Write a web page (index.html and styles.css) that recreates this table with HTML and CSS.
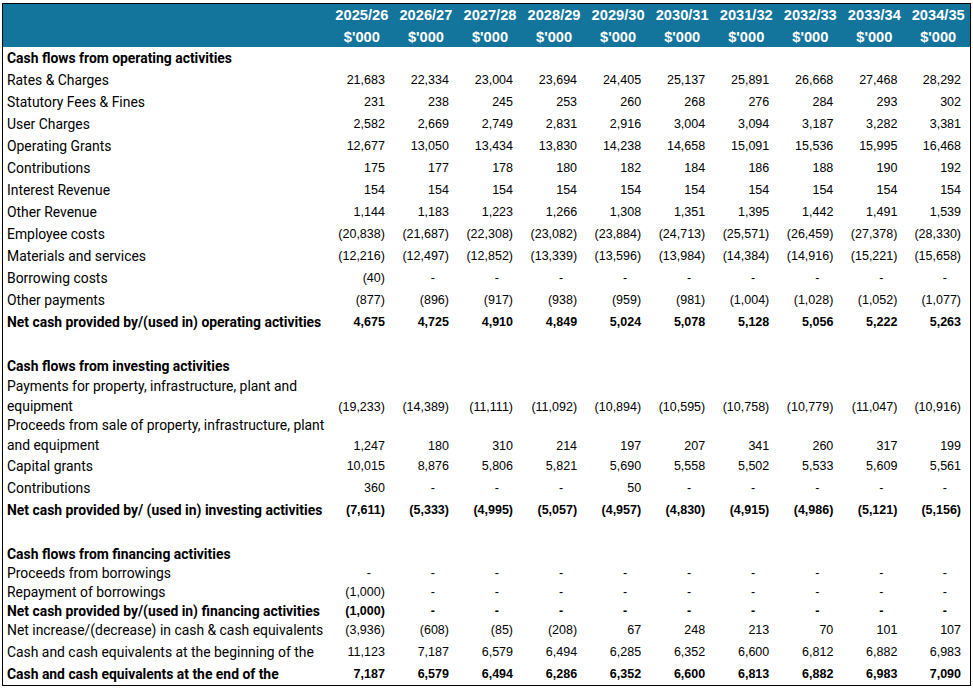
FILE: index.html
```html
<!DOCTYPE html>
<html lang="en">
<head>
<meta charset="utf-8">
<title>Cash flow forecast</title>
<link rel="stylesheet" href="styles.css">
</head>
<body>
<div class="sheet">
<table class="cf">
  <colgroup>
    <col class="c-label">
    <col class="c-num"><col class="c-num"><col class="c-num"><col class="c-num"><col class="c-num">
    <col class="c-num"><col class="c-num"><col class="c-num"><col class="c-num"><col class="c-num">
  </colgroup>
  <thead>
    <tr class="h1">
      <th></th><th>2025/26</th><th>2026/27</th><th>2027/28</th><th>2028/29</th><th>2029/30</th><th>2030/31</th><th>2031/32</th><th>2032/33</th><th>2033/34</th><th>2034/35</th>
    </tr>
    <tr class="h2">
      <th></th><th>$'000</th><th>$'000</th><th>$'000</th><th>$'000</th><th>$'000</th><th>$'000</th><th>$'000</th><th>$'000</th><th>$'000</th><th>$'000</th>
    </tr>
  </thead>
  <tbody>
    <tr class="sec"><td class="lbl">Cash flows from operating activities</td><td></td><td></td><td></td><td></td><td></td><td></td><td></td><td></td><td></td><td></td></tr>
    <tr><td class="lbl">Rates &amp; Charges</td><td>21,683</td><td>22,334</td><td>23,004</td><td>23,694</td><td>24,405</td><td>25,137</td><td>25,891</td><td>26,668</td><td>27,468</td><td>28,292</td></tr>
    <tr><td class="lbl">Statutory Fees &amp; Fines</td><td>231</td><td>238</td><td>245</td><td>253</td><td>260</td><td>268</td><td>276</td><td>284</td><td>293</td><td>302</td></tr>
    <tr><td class="lbl">User Charges</td><td>2,582</td><td>2,669</td><td>2,749</td><td>2,831</td><td>2,916</td><td>3,004</td><td>3,094</td><td>3,187</td><td>3,282</td><td>3,381</td></tr>
    <tr><td class="lbl">Operating Grants</td><td>12,677</td><td>13,050</td><td>13,434</td><td>13,830</td><td>14,238</td><td>14,658</td><td>15,091</td><td>15,536</td><td>15,995</td><td>16,468</td></tr>
    <tr><td class="lbl">Contributions</td><td>175</td><td>177</td><td>178</td><td>180</td><td>182</td><td>184</td><td>186</td><td>188</td><td>190</td><td>192</td></tr>
    <tr><td class="lbl">Interest Revenue</td><td>154</td><td>154</td><td>154</td><td>154</td><td>154</td><td>154</td><td>154</td><td>154</td><td>154</td><td>154</td></tr>
    <tr><td class="lbl">Other Revenue</td><td>1,144</td><td>1,183</td><td>1,223</td><td>1,266</td><td>1,308</td><td>1,351</td><td>1,395</td><td>1,442</td><td>1,491</td><td>1,539</td></tr>
    <tr><td class="lbl">Employee costs</td><td>(20,838)</td><td>(21,687)</td><td>(22,308)</td><td>(23,082)</td><td>(23,884)</td><td>(24,713)</td><td>(25,571)</td><td>(26,459)</td><td>(27,378)</td><td>(28,330)</td></tr>
    <tr><td class="lbl">Materials and services</td><td>(12,216)</td><td>(12,497)</td><td>(12,852)</td><td>(13,339)</td><td>(13,596)</td><td>(13,984)</td><td>(14,384)</td><td>(14,916)</td><td>(15,221)</td><td>(15,658)</td></tr>
    <tr><td class="lbl">Borrowing costs</td><td>(40)</td><td class="dash">-</td><td class="dash">-</td><td class="dash">-</td><td class="dash">-</td><td class="dash">-</td><td class="dash">-</td><td class="dash">-</td><td class="dash">-</td><td class="dash">-</td></tr>
    <tr><td class="lbl">Other payments</td><td>(877)</td><td>(896)</td><td>(917)</td><td>(938)</td><td>(959)</td><td>(981)</td><td>(1,004)</td><td>(1,028)</td><td>(1,052)</td><td>(1,077)</td></tr>
    <tr class="total"><td class="lbl">Net cash provided by/(used in) operating activities</td><td>4,675</td><td>4,725</td><td>4,910</td><td>4,849</td><td>5,024</td><td>5,078</td><td>5,128</td><td>5,056</td><td>5,222</td><td>5,263</td></tr>
    <tr class="blank"><td class="lbl"></td><td></td><td></td><td></td><td></td><td></td><td></td><td></td><td></td><td></td><td></td></tr>
    <tr class="sec"><td class="lbl">Cash flows from investing activities</td><td></td><td></td><td></td><td></td><td></td><td></td><td></td><td></td><td></td><td></td></tr>
    <tr class="two"><td class="lbl">Payments for property, infrastructure, plant and<br>equipment</td><td>(19,233)</td><td>(14,389)</td><td>(11,111)</td><td>(11,092)</td><td>(10,894)</td><td>(10,595)</td><td>(10,758)</td><td>(10,779)</td><td>(11,047)</td><td>(10,916)</td></tr>
    <tr class="two"><td class="lbl">Proceeds from sale of property, infrastructure, plant<br>and equipment</td><td>1,247</td><td>180</td><td>310</td><td>214</td><td>197</td><td>207</td><td>341</td><td>260</td><td>317</td><td>199</td></tr>
    <tr><td class="lbl">Capital grants</td><td>10,015</td><td>8,876</td><td>5,806</td><td>5,821</td><td>5,690</td><td>5,558</td><td>5,502</td><td>5,533</td><td>5,609</td><td>5,561</td></tr>
    <tr><td class="lbl">Contributions</td><td>360</td><td class="dash">-</td><td class="dash">-</td><td class="dash">-</td><td>50</td><td class="dash">-</td><td class="dash">-</td><td class="dash">-</td><td class="dash">-</td><td class="dash">-</td></tr>
    <tr class="total"><td class="lbl">Net cash provided by/ (used in) investing activities</td><td>(7,611)</td><td>(5,333)</td><td>(4,995)</td><td>(5,057)</td><td>(4,957)</td><td>(4,830)</td><td>(4,915)</td><td>(4,986)</td><td>(5,121)</td><td>(5,156)</td></tr>
    <tr class="blank"><td class="lbl"></td><td></td><td></td><td></td><td></td><td></td><td></td><td></td><td></td><td></td><td></td></tr>
    <tr class="sec"><td class="lbl">Cash flows from financing activities</td><td></td><td></td><td></td><td></td><td></td><td></td><td></td><td></td><td></td><td></td></tr>
    <tr class="short"><td class="lbl">Proceeds from borrowings</td><td class="dash">-</td><td class="dash">-</td><td class="dash">-</td><td class="dash">-</td><td class="dash">-</td><td class="dash">-</td><td class="dash">-</td><td class="dash">-</td><td class="dash">-</td><td class="dash">-</td></tr>
    <tr class="short"><td class="lbl">Repayment of borrowings</td><td>(1,000)</td><td class="dash">-</td><td class="dash">-</td><td class="dash">-</td><td class="dash">-</td><td class="dash">-</td><td class="dash">-</td><td class="dash">-</td><td class="dash">-</td><td class="dash">-</td></tr>
    <tr class="short total"><td class="lbl">Net cash provided by/(used in) financing activities</td><td>(1,000)</td><td class="dash">-</td><td class="dash">-</td><td class="dash">-</td><td class="dash">-</td><td class="dash">-</td><td class="dash">-</td><td class="dash">-</td><td class="dash">-</td><td class="dash">-</td></tr>
    <tr class="short"><td class="lbl">Net increase/(decrease) in cash &amp; cash equivalents</td><td>(3,936)</td><td>(608)</td><td>(85)</td><td>(208)</td><td>67</td><td>248</td><td>213</td><td>70</td><td>101</td><td>107</td></tr>
    <tr><td class="lbl">Cash and cash equivalents at the beginning of the</td><td>11,123</td><td>7,187</td><td>6,579</td><td>6,494</td><td>6,285</td><td>6,352</td><td>6,600</td><td>6,812</td><td>6,882</td><td>6,983</td></tr>
    <tr class="total"><td class="lbl">Cash and cash equivalents at the end of the</td><td>7,187</td><td>6,579</td><td>6,494</td><td>6,286</td><td>6,352</td><td>6,600</td><td>6,813</td><td>6,882</td><td>6,983</td><td>7,090</td></tr>
  </tbody>
</table>
</div>
</body>
</html>
```
FILE: styles.css
```css
html, body {
  margin: 0;
  padding: 0;
  background: #ffffff;
}

.sheet {
  padding: 3px 0 0 2px;
}

.cf {
  border-collapse: collapse;
  table-layout: fixed;
  width: 969px;
  border: 1px solid #000000;
  font-family: "Liberation Sans", Arial, sans-serif;
  color: #000000;
}

.c-label { width: 327px; }
.c-num { width: 64px; }

.cf th {
  background: #13749c;
  color: #ffffff;
  font-family: "Liberation Sans", Arial, sans-serif;
  font-weight: bold;
  font-size: 14.67px;
  line-height: 18px;
  text-align: center;
  padding: 0;
  white-space: nowrap;
  vertical-align: middle;
}

.cf .h1 th { height: 22px; }
.cf .h2 th { height: 21px; }

.cf td {
  height: 20px;
  padding: 0 9px 2px 0;
  font-size: 12.5px;
  line-height: 18px;
  text-align: right;
  vertical-align: bottom;
  white-space: nowrap;
}

.cf td.lbl {
  padding: 0 0 2px 4px;
  text-align: left;
  font-family: Roboto, "Liberation Sans", Arial, sans-serif;
  font-size: 13.9px;
  overflow: hidden;
}

.cf td.dash {
  padding-right: 23px;
}

.cf .sec td.lbl,
.cf .total td {
  font-weight: bold;
}

.cf .two td {
  height: 39px;
  padding-bottom: 0;
}

.cf .two td.lbl {
  line-height: 19.5px;
}

.cf .short td {
  height: 16px;
  padding-bottom: 3px;
  line-height: 16px;
}
```
